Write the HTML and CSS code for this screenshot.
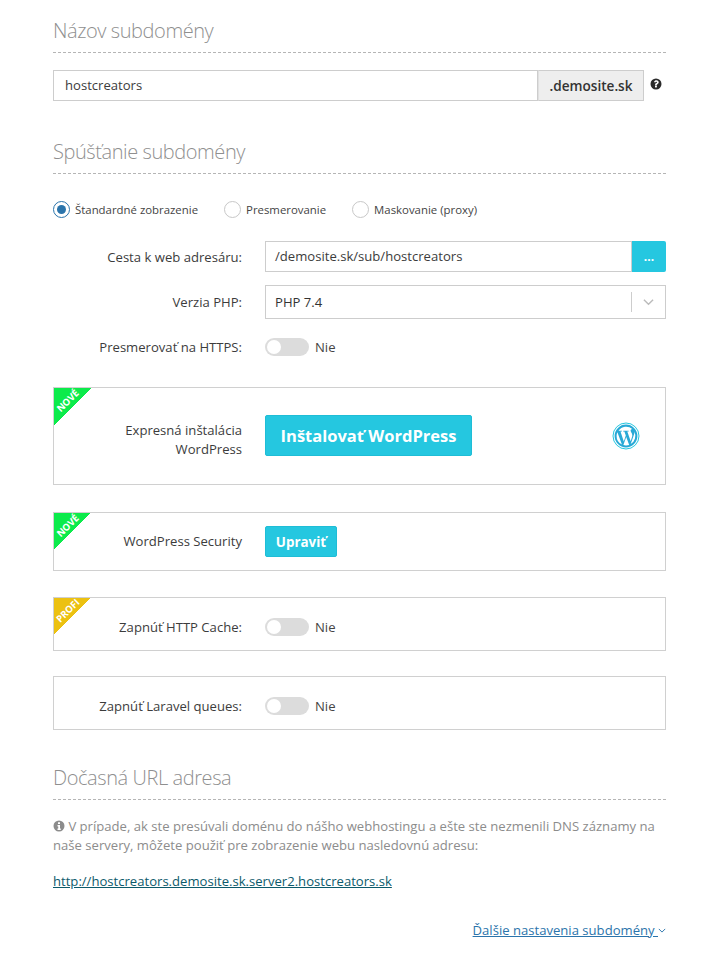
FILE: index.html
```html
<!DOCTYPE html>
<html lang="sk">
<head>
<meta charset="utf-8">
<title>Subdoména</title>
<link rel="stylesheet" href="styles.css">
</head>
<body>
<main class="page">
  <h2 class="heading first">Názov subdomény</h2>
  <div class="name-row">
    <div class="input-group">
      <div class="field name-field">hostcreators</div>
      <div class="addon">.demosite.sk</div>
    </div>
    <svg class="help" viewBox="0 0 24 24" aria-hidden="true"><path fill-rule="evenodd" d="M12 1a11 11 0 1 0 0 22 11 11 0 0 0 0-22zm1.8 17.2a.8.8 0 0 1-.8.8h-2.2a.8.8 0 0 1-.8-.8V16a.8.8 0 0 1 .8-.8H13a.8.8 0 0 1 .8.8zM16.4 11c-.8 1-2.5 1.5-2.6 2.7a.7.7 0 0 1-.7.6h-2.3a.6.6 0 0 1-.6-.7c.1-2 1.6-2.8 2.6-3.4.8-.5 1.3-.8 1.3-1.4 0-.7-.8-1.2-1.6-1.2-1 0-1.4.4-2.1 1.3a.7.7 0 0 1-1 .1L8.4 7.7a.7.7 0 0 1-.1-.9C9.4 5.100 10.900 4.300 12.900 4.300c2.200 0 4.500 1.700 4.500 4 0 1.200-.4 2-1 2.700z"/></svg>
  </div>

  <h2 class="heading second">Spúšťanie subdomény</h2>
  <div class="radios">
    <label class="radio"><span class="dot checked"></span>Štandardné zobrazenie</label>
    <label class="radio"><span class="dot"></span>Presmerovanie</label>
    <label class="radio"><span class="dot"></span>Maskovanie (proxy)</label>
  </div>

  <div class="form-row path-row">
    <div class="label">Cesta k web adresáru:</div>
    <div class="input-group grow">
      <div class="field path-field">/demosite.sk/sub/hostcreators</div>
      <button class="browse" type="button">...</button>
    </div>
  </div>
  <div class="form-row php-row">
    <div class="label">Verzia PHP:</div>
    <div class="select grow">
      <span class="select-value">PHP 7.4</span>
      <span class="select-sep"></span>
      <svg class="select-arrow" viewBox="0 0 12 8" aria-hidden="true"><path d="M1 1.500l5 5 5-5"/></svg>
    </div>
  </div>
  <div class="form-row https-row">
    <div class="label">Presmerovať na HTTPS:</div>
    <span class="toggle"></span><span class="toggle-text">Nie</span>
  </div>

  <section class="box box-install">
    <span class="ribbon green"><span>NOVÉ</span></span>
    <div class="form-row">
      <div class="label two-line">Expresná inštalácia WordPress</div>
      <button class="btn btn-big" type="button">Inštalovať WordPress</button>
      <svg class="wp" viewBox="0 0 28 28" aria-hidden="true">
        <circle class="wp-ring" cx="14" cy="14" r="13"/>
        <path class="wp-fill" fill-rule="evenodd" d="M14 2.600a11.400 11.400 0 1 0 0 22.800 11.400 11.400 0 0 0 0-22.800zM4.600 14c0-1.400.3-2.700.8-3.800l4.500 12.300A9.400 9.400 0 0 1 4.600 14zm9.400 9.400c-.9 0-1.800-.1-2.600-.4l2.800-8.100 2.900 7.900.2.300c-1 .2-2 .3-3.300.3zm1.300-13.800c.6 0 1.100-.1 1.100-.1.500-.1.500-.9 0-.8 0 0-1.500.1-2.500.1-.9 0-2.400-.1-2.400-.1-.6-.1-.6.800-.1.800l1 .1 1.400 3.900-2 6-3.300-9.900c.6 0 1.100-.1 1.100-.1.500-.1.500-.9 0-.8 0 0-1.500.1-2.500.1h-.6A9.400 9.400 0 0 1 20.300 7h-.1c-.9 0-1.600.8-1.600 1.700 0 .8.500 1.400 1 2.200.3.600.7 1.400.7 2.500 0 .8-.3 1.700-.7 2.900l-.9 3zm3.400 12.500l2.900-8.300c.5-1.300.7-2.400.7-3.300l-.1-1a9.400 9.400 0 0 1-3.500 12.600z"/>
      </svg>
    </div>
  </section>

  <section class="box box-security">
    <span class="ribbon green"><span>NOVÉ</span></span>
    <div class="form-row">
      <div class="label">WordPress Security</div>
      <button class="btn btn-small" type="button">Upraviť</button>
    </div>
  </section>

  <section class="box box-cache">
    <span class="ribbon yellow"><span>PROFI</span></span>
    <div class="form-row">
      <div class="label">Zapnúť HTTP Cache:</div>
      <span class="toggle"></span><span class="toggle-text">Nie</span>
    </div>
  </section>

  <section class="box box-queues">
    <div class="form-row">
      <div class="label">Zapnúť Laravel queues:</div>
      <span class="toggle"></span><span class="toggle-text">Nie</span>
    </div>
  </section>

  <h2 class="heading third">Dočasná URL adresa</h2>
  <p class="note"><svg class="info" viewBox="0 0 24 24" aria-hidden="true"><path fill-rule="evenodd" d="M12 1a11 11 0 1 0 0 22 11 11 0 0 0 0-22zM10 4.500h4v3.500h-4zM9 10h5v7h1.500v3h-6.500v-3h1.500v-4h-1.500z"/></svg> V prípade, ak ste presúvali doménu do nášho webhostingu a ešte ste nezmenili DNS záznamy na naše servery, môžete použiť pre zobrazenie webu nasledovnú adresu:</p>
  <p class="url"><a href="#">http://hostcreators.demosite.sk.server2.hostcreators.sk</a></p>
  <p class="more"><a href="#">Ďalšie nastavenia subdomény <svg class="more-arrow" viewBox="0 0 10 6" aria-hidden="true"><path d="M1 1l4 4 4-4"/></svg></a></p>
</main>
</body>
</html>
```
FILE: styles.css
```css
* { box-sizing: border-box; }
html, body { margin: 0; padding: 0; background: #fff; }
body { font-family: "Open Sans", sans-serif; font-size: 13.1px; color: #3c3c3c; }
.page { width: 613px; margin-left: 53px; height: 960px; overflow: hidden; }
.heading {
  margin: 0; height: 35px; font-size: 20px; font-weight: 300; line-height: 25px; color: #8f8f8f;
  letter-spacing: -0.42px; border-bottom: 1px dashed #b5b5b5;
}
.heading.first { margin-top: 18px; }
.heading.second { margin-top: 38px; }
.heading.third { margin-top: 35px; }
.name-row { display: flex; align-items: center; margin-top: 17px; width: 613px; }
.input-group { display: flex; height: 31px; }
.name-row .input-group { width: 591px; }
.grow { flex: 1; }
.field {
  flex: 1; border: 1px solid #cdcdcd; padding-left: 11px; line-height: 29px; color: #3c3c3c; background: #fff;
}
.addon {
  width: 106px; background: #eee; border: 1px solid #cdcdcd; border-left-color: #e0e0e0; text-align: center;
  font-size: 13.6px; font-weight: 600; line-height: 29px; color: #333;
}
.help { width: 12px; height: 12px; margin-left: 6px; margin-top: -3px; fill: #2b2b2b; }
.radios { display: flex; margin-top: 26px; height: 18px; align-items: center; font-size: 11.4px; }
.radio { display: flex; align-items: center; color: #444; margin-right: 26px; }
.dot { width: 17px; height: 17px; border: 1px solid #c8c8c8; border-radius: 50%; margin-right: 5px; background: #fff; }
.dot.checked { border-color: #2b74ab; position: relative; }
.dot.checked::after {
  content: ""; position: absolute; left: 3px; top: 3px; width: 9px; height: 9px; border-radius: 50%; background: #2b74ab;
}
.form-row { display: flex; align-items: center; }
.label { width: 189px; margin-right: 23px; text-align: right; color: #3c3c3c; flex: none; }
.path-row { margin-top: 23px; }
.path-row .input-group { height: 31px; }
.path-field { padding-left: 9px; }
.browse {
  width: 34px; border: 0; border-radius: 0 2px 2px 0; background: #25c7e0; color: #fff; font: 700 12px "Open Sans", sans-serif; padding: 0;
}
.php-row { margin-top: 13px; }
.select { display: flex; align-items: center; height: 34px; border: 1px solid #cdcdcd; padding-left: 9px; }
.select-value { flex: 1; color: #333; }
.select-sep { width: 1px; height: 20px; background: #cdcdcd; }
.select-arrow { width: 11px; height: 8px; margin: 0 11px 0 11px; fill: none; stroke: #bbb; stroke-width: 1.500; }
.https-row { margin-top: 18px; height: 19px; }
.toggle {
  position: relative; flex: none; width: 44px; height: 18px; border-radius: 9px; background: #dcdcdc;
}
.toggle::after {
  content: ""; position: absolute; left: 2px; top: 2px; width: 14px; height: 14px; border-radius: 50%; background: #fff;
}
.toggle-text { margin-left: 6px; color: #444; }
.box { position: relative; border: 1px solid #d0d0d0; }
.box .form-row { height: 100%; }
.ribbon { position: absolute; left: 0; top: 0; width: 37px; height: 37px; }
.ribbon.green { background: linear-gradient(135deg, #0ceb4b 50%, transparent 50%); }
.ribbon.yellow { background: linear-gradient(135deg, #ecc111 50%, transparent 50%); }
.ribbon span {
  position: absolute; left: 0; top: 8px; width: 28px; text-align: center; transform: rotate(-45deg);
  color: #fff; font-size: 9.5px; font-weight: 700; line-height: 10px;
}
.box-install { margin-top: 31px; height: 98px; }
.box-security { margin-top: 27px; height: 59px; }
.box-cache { margin-top: 26px; height: 54px; }
.box-queues { margin-top: 25px; height: 54px; }
.box-cache .form-row, .box-queues .form-row { padding-top: 6px; }
.box .label { width: 188px; line-height: 19px; }
.two-line { padding-left: 40px; margin-top: 8px; }
.btn {
  flex: none; border: 1px solid #1fbdd6; border-radius: 2px; background: #25c7e0; color: #fff;
  font-family: "Open Sans", sans-serif; font-weight: 700; padding: 0;
}
.btn-big { width: 207px; height: 41px; font-size: 16.5px; margin-top: -1px; }
.btn-small { width: 72px; height: 31px; font-size: 13.4px; }
.wp { width: 28px; height: 28px; margin-left: 140px; }
.wp-ring { fill: none; stroke: #25c7e0; stroke-width: 1; }
.wp-fill { fill: #28a9d6; }
.note { margin: 17px 0 0; line-height: 19px; color: #8c8c8c; }
.info { width: 12px; height: 12px; fill: #8c8c8c; vertical-align: -1px; }
.url { margin: 17px 0 0; line-height: 19px; }
.url a { color: #0c5a6b; text-decoration: underline; }
.more { margin: 30px 0 0; line-height: 19px; text-align: right; }
.more a { color: #2b74ab; text-decoration: underline; }
.more-arrow { width: 8px; height: 5px; fill: none; stroke: #2b74ab; stroke-width: 1.200; vertical-align: 2px; }
```
